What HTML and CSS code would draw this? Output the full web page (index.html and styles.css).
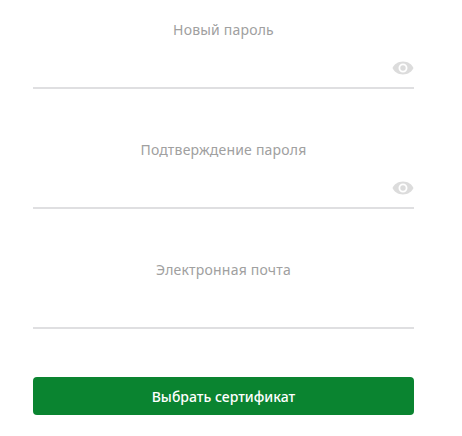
FILE: index.html
```html
<!DOCTYPE html>
<html lang="en">
<head>
    <meta charset="UTF-8">
    <meta name="viewport" content="width=device-width, initial-scale=1.0">
    <title>Новый пароль</title>
    <link rel="stylesheet" href="styles.css">
</head>
<body>
    <form class="form">
        <div class="field">
            <label class="label">Новый пароль</label>
            <div class="input">
                <svg class="eye" viewBox="0 0 22 14"><path fill-rule="evenodd" d="M11 0.5C6 0.5 2 3.4 0.5 7 2 10.6 6 13.5 11 13.5S20 10.6 21.5 7C20 3.4 16 0.5 11 0.5ZM11 11.5A4.5 4.5 0 1 1 11 2.5 4.5 4.5 0 0 1 11 11.5ZM11 4.3A2.7 2.7 0 1 0 11 9.7 2.7 2.7 0 0 0 11 4.3Z"/></svg>
            </div>
        </div>
        <div class="field">
            <label class="label">Подтверждение пароля</label>
            <div class="input">
                <svg class="eye" viewBox="0 0 22 14"><path fill-rule="evenodd" d="M11 0.5C6 0.5 2 3.4 0.5 7 2 10.6 6 13.5 11 13.5S20 10.6 21.5 7C20 3.4 16 0.5 11 0.5ZM11 11.5A4.5 4.5 0 1 1 11 2.5 4.5 4.5 0 0 1 11 11.5ZM11 4.3A2.7 2.7 0 1 0 11 9.7 2.7 2.7 0 0 0 11 4.3Z"/></svg>
            </div>
        </div>
        <div class="field">
            <label class="label">Электронная почта</label>
            <div class="input"></div>
        </div>
        <button class="submit" type="button">Выбрать сертификат</button>
    </form>
</body>
</html>
```

FILE: styles.css
```css
* {
    box-sizing: border-box;
    margin: 0;
    padding: 0;
}
body {
    font-family: "Noto Sans", sans-serif;
    background: #ffffff;
}
.form {
    width: 381px;
    margin-left: 33px;
    padding-top: 20px;
}
.field {
    height: 117px;
}
.field + .field {
    margin-top: 3px;
}
.label {
    display: block;
    height: 20px;
    line-height: 20px;
    font-size: 14px;
    letter-spacing: 0.2px;
    color: #a0a0a0;
    text-align: center;
}
.input {
    display: flex;
    justify-content: flex-end;
    align-items: flex-end;
    height: 49px;
    padding-bottom: 12px;
    border-bottom: 2px solid #dfdfe1;
}
.eye {
    display: block;
    width: 22px;
    height: 14px;
    fill: #dcdcdc;
}
.submit {
    display: block;
    width: 100%;
    height: 38px;
    border: none;
    border-radius: 4px;
    background: #0a8430;
    color: #ffffff;
    font-family: "Noto Sans", sans-serif;
    font-size: 14px;
    font-weight: 500;
}
```
